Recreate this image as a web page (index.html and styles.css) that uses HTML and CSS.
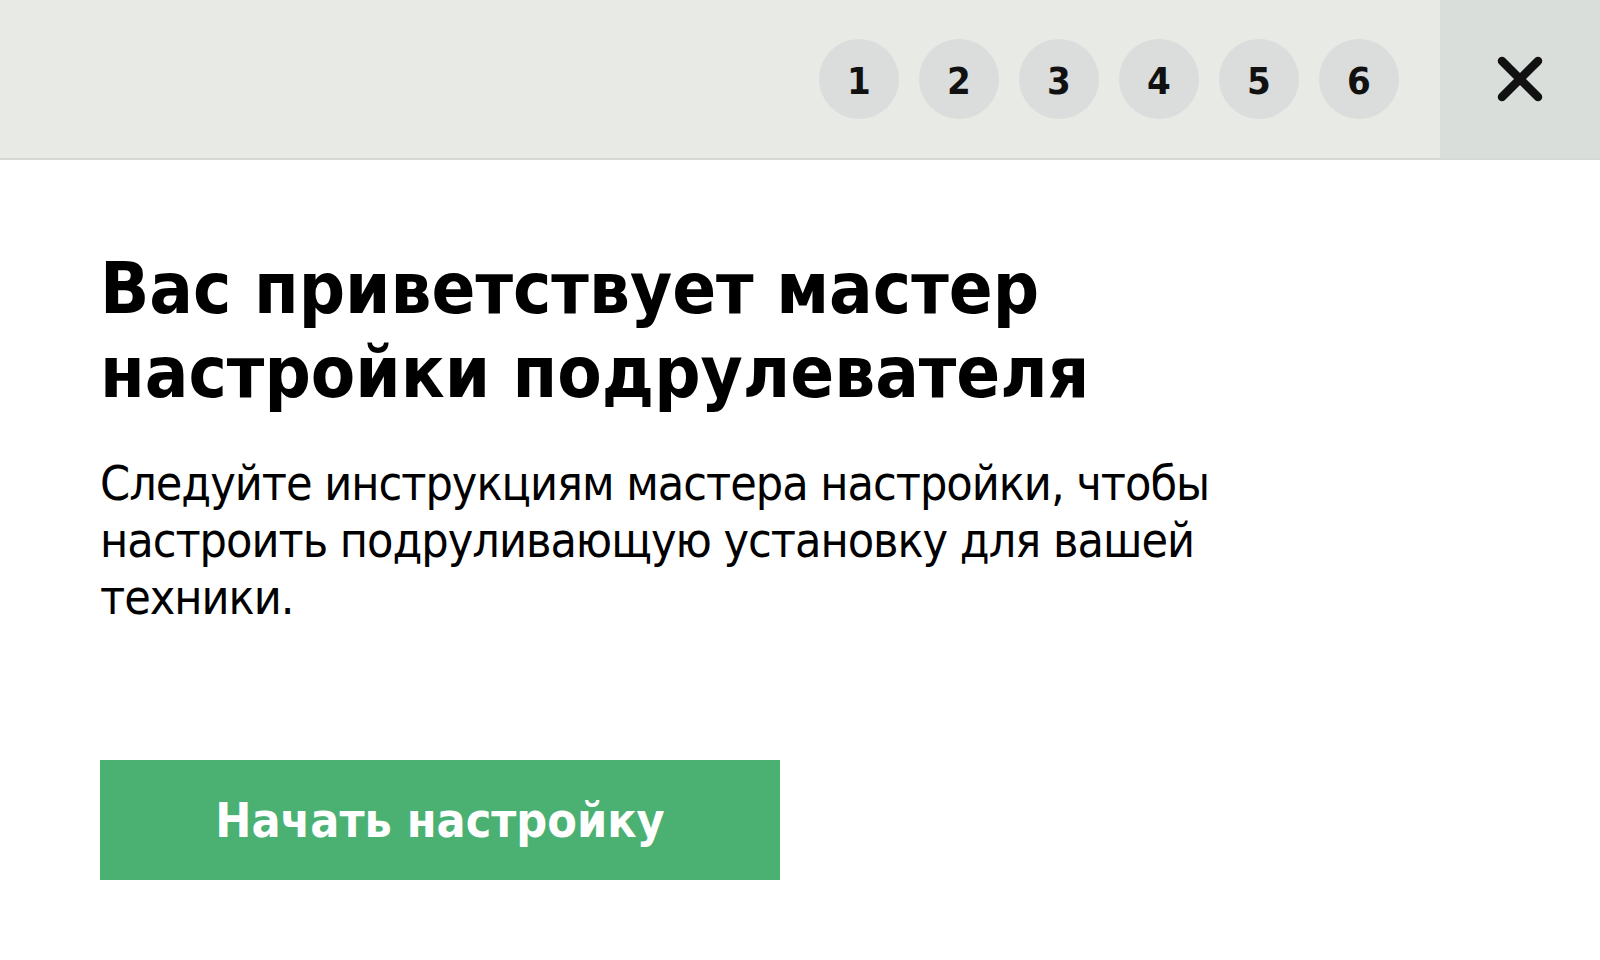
FILE: index.html
```html
<!DOCTYPE html>
<html lang="ru">
<head>
<meta charset="utf-8">
<title>Мастер настройки</title>
<link rel="stylesheet" href="styles.css">
</head>
<body>
<header class="topbar">
  <nav class="steps">
    <span class="step">1</span>
    <span class="step">2</span>
    <span class="step">3</span>
    <span class="step">4</span>
    <span class="step">5</span>
    <span class="step">6</span>
  </nav>
  <button class="close" aria-label="Закрыть">
    <svg width="46" height="46" viewBox="0 0 46 46"><path d="M5 5 L41 41 M41 5 L5 41" stroke="#111" stroke-width="8.5" stroke-linecap="round" fill="none"/></svg>
  </button>
</header>
<main class="content">
  <h1 class="title">Вас приветствует мастер<br>настройки подрулевателя</h1>
  <p class="lead">Следуйте инструкциям мастера настройки, чтобы<br>настроить подруливающую установку для вашей<br>техники.</p>
  <button class="start">Начать настройку</button>
</main>
</body>
</html>
```
FILE: styles.css
```css
html, body {
  margin: 0;
  padding: 0;
  background: #ffffff;
  font-family: "DejaVu Sans Condensed", "DejaVu Sans", Verdana, sans-serif;
  color: #000;
}
.topbar {
  display: flex;
  justify-content: flex-end;
  height: 158px;
  background: #e8eae6;
  border-bottom: 2px solid #d6d8d4;
}
.steps {
  display: flex;
  align-items: center;
  gap: 20px;
  padding-right: 41px;
}
.step {
  width: 80px;
  height: 80px;
  border-radius: 50%;
  background: #dadddb;
  display: flex;
  align-items: center;
  justify-content: center;
  font-weight: bold;
  font-size: 38px;
  padding-top: 3px;
  box-sizing: border-box;
  color: #111;
}
.close {
  width: 160px;
  height: 158px;
  border: 0;
  padding: 0;
  margin: 0;
  background: #dadedb;
  display: flex;
  align-items: center;
  justify-content: center;
}
.content {
  padding: 86px 0 0 100px;
}
.title {
  margin: 0;
  font-size: 72px;
  line-height: 84px;
  font-weight: bold;
  letter-spacing: 0;
}
.lead {
  margin: 41px 0 0 0;
  font-size: 48px;
  line-height: 57px;
  font-weight: normal;
  letter-spacing: -1px;
}
.start {
  margin-top: 134px;
  width: 680px;
  height: 120px;
  border: 0;
  background: #4bb173;
  color: #fff;
  font-family: "DejaVu Sans Condensed", "DejaVu Sans", Verdana, sans-serif;
  font-weight: bold;
  font-size: 48px;
  padding: 0;
}
```
